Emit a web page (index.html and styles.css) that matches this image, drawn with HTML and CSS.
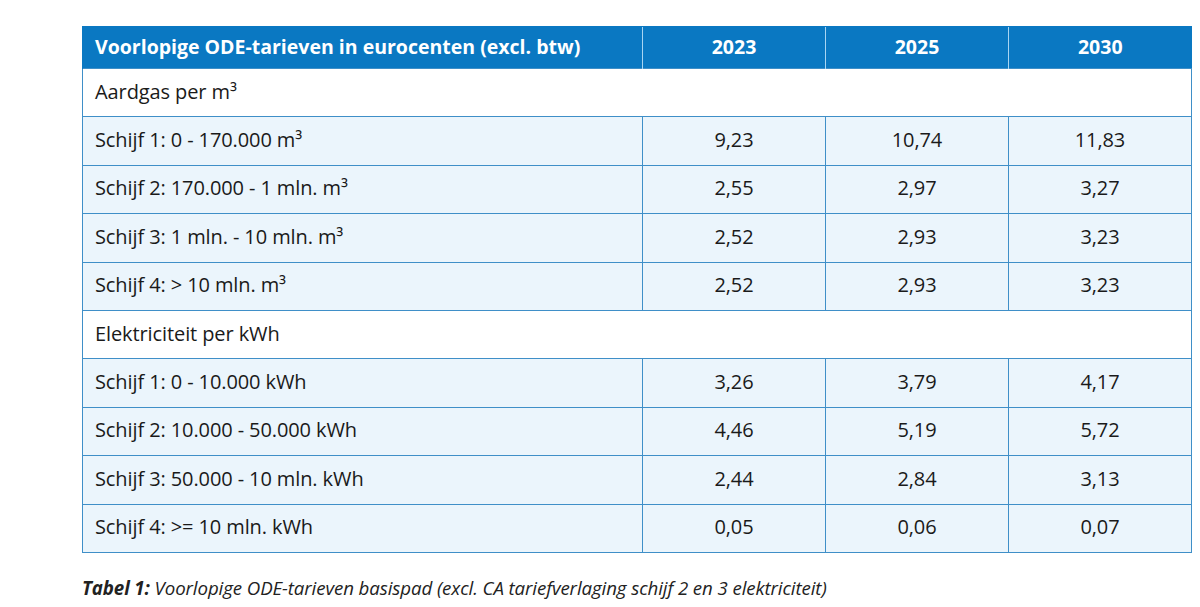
FILE: index.html
```html
<!DOCTYPE html>
<html lang="nl">
<head>
<meta charset="utf-8">
<title>ODE-tarieven</title>
<link rel="stylesheet" href="styles.css">
</head>
<body>
<div class="page">
  <table class="rates">
    <colgroup>
      <col class="c-label">
      <col class="c-num">
      <col class="c-num">
      <col class="c-num">
    </colgroup>
    <thead>
      <tr>
        <th class="label">Voorlopige ODE-tarieven in eurocenten (excl. btw)</th>
        <th>2023</th>
        <th>2025</th>
        <th>2030</th>
      </tr>
    </thead>
    <tbody>
      <tr class="cat"><td class="label" colspan="4">Aardgas per m³</td></tr>
      <tr><td class="label">Schijf 1: 0 - 170.000 m³</td><td>9,23</td><td>10,74</td><td>11,83</td></tr>
      <tr><td class="label">Schijf 2: 170.000 - 1 mln. m³</td><td>2,55</td><td>2,97</td><td>3,27</td></tr>
      <tr><td class="label">Schijf 3: 1 mln. - 10 mln. m³</td><td>2,52</td><td>2,93</td><td>3,23</td></tr>
      <tr><td class="label">Schijf 4: &gt; 10 mln. m³</td><td>2,52</td><td>2,93</td><td>3,23</td></tr>
      <tr class="cat"><td class="label" colspan="4">Elektriciteit per kWh</td></tr>
      <tr><td class="label">Schijf 1: 0 - 10.000 kWh</td><td>3,26</td><td>3,79</td><td>4,17</td></tr>
      <tr><td class="label">Schijf 2: 10.000 - 50.000 kWh</td><td>4,46</td><td>5,19</td><td>5,72</td></tr>
      <tr><td class="label">Schijf 3: 50.000 - 10 mln. kWh</td><td>2,44</td><td>2,84</td><td>3,13</td></tr>
      <tr><td class="label">Schijf 4: &gt;= 10 mln. kWh</td><td>0,05</td><td>0,06</td><td>0,07</td></tr>
    </tbody>
  </table>
  <p class="caption"><b>Tabel 1:</b> Voorlopige ODE-tarieven basispad (excl. CA tariefverlaging schijf 2 en 3 elektriciteit)</p>
</div>
</body>
</html>
```

FILE: styles.css
```css
html, body {
  margin: 0;
  padding: 0;
  background: #ffffff;
}

body {
  font-family: "Open Sans", "Noto Sans", sans-serif;
  color: #1a1a1a;
}

.page {
  padding: 26px 10px 0 82px;
}

.rates {
  width: 1108px;
  border-collapse: collapse;
  table-layout: fixed;
}

.c-label { width: 560px; }
.c-num { width: 183px; }

.rates th,
.rates td {
  text-align: center;
  padding: 0 0 3px 0;
  font-size: 20px;
  letter-spacing: -0.1px;
}

.rates th {
  background: #0a78c2;
  color: #ffffff;
  font-weight: 700;
  font-size: 19.5px;
  letter-spacing: 0;
  height: 38px;
  border-left: 1.5px solid #a9d5f2;
  border-top: 1px solid #0a78c2;
}

.rates th:first-child {
  border-left: 1.5px solid #0a78c2;
}

.rates td {
  background: #ebf5fc;
  height: 44.4px;
  border: 1.5px solid #3f8fc8;
}

.rates .cat td {
  background: #ffffff;
}

.rates .label {
  text-align: left;
  padding-left: 12px;
}

.caption {
  margin: 22px 0 0 0;
  font-size: 18.7px;
  font-style: italic;
  color: #222222;
  letter-spacing: -0.1px;
}

.caption b {
  font-weight: 700;
}
```
